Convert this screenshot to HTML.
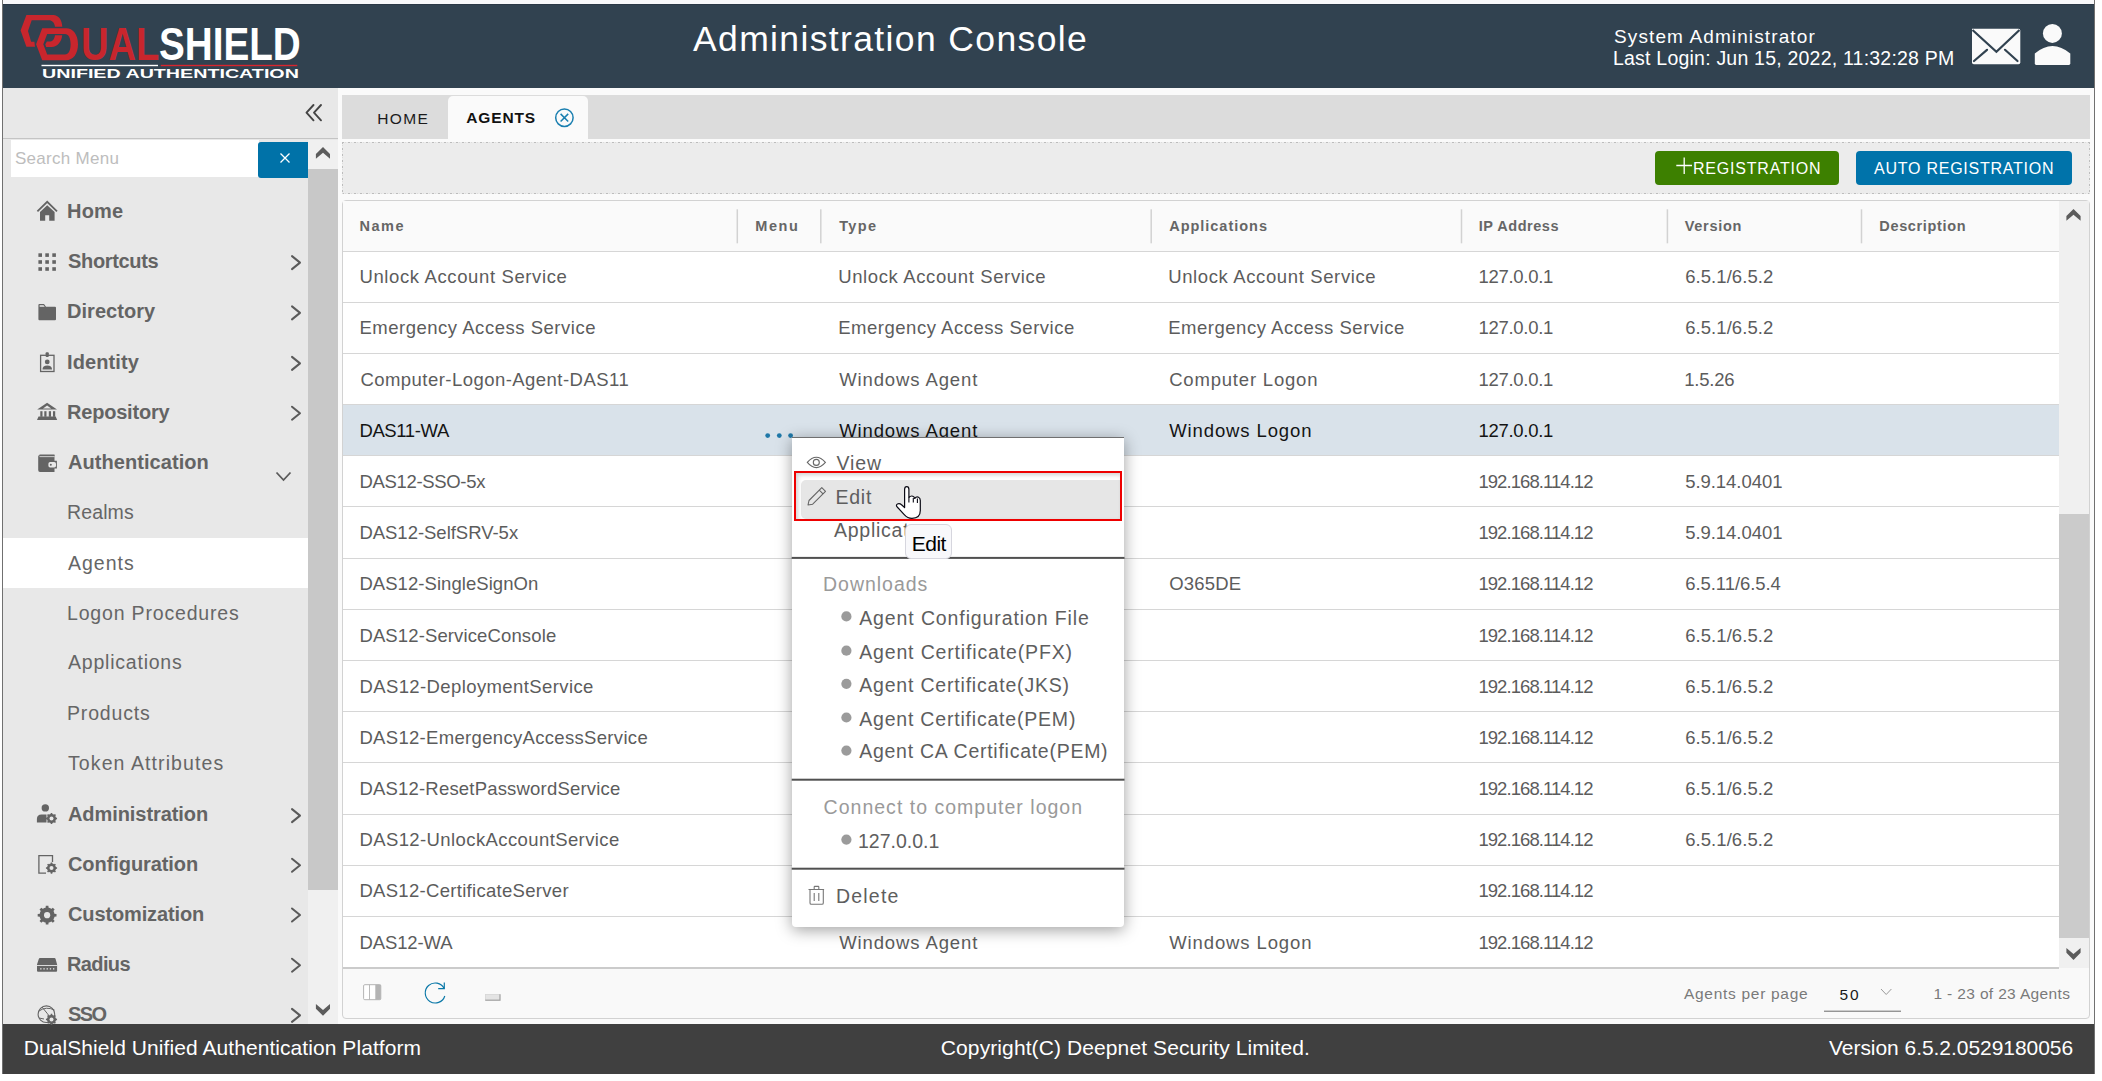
<!DOCTYPE html>
<html><head><meta charset="utf-8">
<style>
*{box-sizing:border-box;margin:0;padding:0}
html,body{width:2102px;height:1081px;overflow:hidden;background:#ffffff;font-family:"Liberation Sans",sans-serif;position:relative}
.a{position:absolute}
.t{position:absolute;white-space:nowrap;line-height:1;font-family:"Liberation Sans",sans-serif}
svg{position:absolute;left:0;top:0}
</style></head><body>
<div class="a" style="left:2px;top:0;width:1px;height:1074px;background:#707070"></div>
<div class="a" style="left:2094px;top:0;width:1px;height:1074px;background:#707070"></div>
<div class="a" style="left:3px;top:0;width:2091px;height:4px;background:#f8f8fa"></div>
<div class="a" style="left:3px;top:4px;width:2091px;height:84px;background:#314250;border-top:1px solid #2a3846"></div>
<div class="a" style="left:3px;top:88px;width:335px;height:936px;background:#e8e8e8"></div>
<div class="a" style="left:338px;top:88px;width:1756px;height:936px;background:#fafafa"></div>
<div class="a" style="left:3px;top:137.5px;width:335px;height:1px;background:#c4c4c4"></div>
<div class="a" style="left:11px;top:140.3px;width:248px;height:36.7px;background:#ffffff"></div>
<div class="a" style="left:258px;top:142px;width:50px;height:35.7px;background:#0072a8;border-radius:3px 0 0 3px"></div>
<div class="a" style="left:308px;top:140px;width:30px;height:884px;background:#f0f0f0"></div>
<div class="a" style="left:308px;top:169px;width:30px;height:721px;background:#c8c8c8"></div>
<div class="a" style="left:3px;top:538px;width:305px;height:50px;background:#ffffff"></div>
<div class="a" style="left:342px;top:95px;width:1747.5px;height:43.7px;background:#dcdcdc"></div>
<div class="a" style="left:448.2px;top:96px;width:139.5px;height:42.7px;background:#fafafa;border-radius:5px 5px 0 0"></div>
<div class="a" style="left:342px;top:142px;width:1747.5px;height:51.5px;background:#ececec"></div>
<div class="a" style="left:342px;top:142px;width:1747.5px;height:1px;background:repeating-linear-gradient(90deg,#bcbcbc 0 2px,#ececec 2px 3px,#dcdcdc 3px 4px,#ececec 4px 6px)"></div>
<div class="a" style="left:342px;top:192.5px;width:1747.5px;height:1px;background:repeating-linear-gradient(90deg,#bcbcbc 0 2px,#ececec 2px 3px,#dcdcdc 3px 4px,#ececec 4px 6px)"></div>
<div class="a" style="left:342px;top:142px;width:1px;height:51.5px;background:repeating-linear-gradient(180deg,#bcbcbc 0 2px,#ececec 2px 3px,#dcdcdc 3px 4px,#ececec 4px 6px)"></div>
<div class="a" style="left:2088.5px;top:142px;width:1px;height:51.5px;background:repeating-linear-gradient(180deg,#bcbcbc 0 2px,#ececec 2px 3px,#dcdcdc 3px 4px,#ececec 4px 6px)"></div>
<div class="a" style="left:1655px;top:151px;width:184px;height:33.6px;background:#3d8000;border-radius:4px"></div>
<div class="a" style="left:1856px;top:151px;width:216px;height:33.6px;background:#0073aa;border-radius:4px"></div>
<div class="a" style="left:342px;top:200px;width:1747.5px;height:819.3px;background:#f9f9f9;border:1px solid #d2d2d2;border-radius:4px"></div>
<div class="a" style="left:343px;top:201px;width:1716px;height:50.3px;background:#fafafa"></div>
<div class="a" style="left:343px;top:250.50px;width:1716px;height:51.19px;background:#ffffff;border-top:1px solid #d6d6d6"></div>
<div class="a" style="left:343px;top:301.69px;width:1716px;height:51.19px;background:#ffffff;border-top:1px solid #d6d6d6"></div>
<div class="a" style="left:343px;top:352.88px;width:1716px;height:51.19px;background:#ffffff;border-top:1px solid #d6d6d6"></div>
<div class="a" style="left:343px;top:404.07px;width:1716px;height:51.19px;background:#d9e2ea;border-top:1px solid #d6d6d6"></div>
<div class="a" style="left:343px;top:455.26px;width:1716px;height:51.19px;background:#ffffff;border-top:1px solid #d6d6d6"></div>
<div class="a" style="left:343px;top:506.45px;width:1716px;height:51.19px;background:#ffffff;border-top:1px solid #d6d6d6"></div>
<div class="a" style="left:343px;top:557.64px;width:1716px;height:51.19px;background:#ffffff;border-top:1px solid #d6d6d6"></div>
<div class="a" style="left:343px;top:608.83px;width:1716px;height:51.19px;background:#ffffff;border-top:1px solid #d6d6d6"></div>
<div class="a" style="left:343px;top:660.02px;width:1716px;height:51.19px;background:#ffffff;border-top:1px solid #d6d6d6"></div>
<div class="a" style="left:343px;top:711.21px;width:1716px;height:51.19px;background:#ffffff;border-top:1px solid #d6d6d6"></div>
<div class="a" style="left:343px;top:762.40px;width:1716px;height:51.19px;background:#ffffff;border-top:1px solid #d6d6d6"></div>
<div class="a" style="left:343px;top:813.59px;width:1716px;height:51.19px;background:#ffffff;border-top:1px solid #d6d6d6"></div>
<div class="a" style="left:343px;top:864.78px;width:1716px;height:51.19px;background:#ffffff;border-top:1px solid #d6d6d6"></div>
<div class="a" style="left:343px;top:915.97px;width:1716px;height:51.19px;background:#ffffff;border-top:1px solid #d6d6d6"></div>
<div class="a" style="left:343px;top:966.7px;width:1716px;height:2px;background:#cbcbcb"></div>
<div class="a" style="left:2059px;top:201px;width:29.5px;height:767px;background:#f0f0f0"></div>
<div class="a" style="left:2059px;top:514px;width:29.5px;height:423.6px;background:#cbcbcb"></div>
<div class="a" style="left:3px;top:1024px;width:2091px;height:49.5px;background:#404040"></div>
<svg width="2102" height="1081" viewBox="0 0 2102 1081">
<path fill="#c8262d" d="M26.4 15 L53.3 15 C58.5 15 62 20 62.3 26.7 L55 26.7 C54.5 22.5 52 20.3 48.9 20.3 L31.7 20.3 L28 31.1 L31.1 41.7 L34.4 41.7 L35 46.7 L26.4 46.7 L20.6 30.5 Z"/>
<path fill="#c8262d" fill-rule="evenodd" d="M42.2 28.3 L66.1 28.3 C73 28.3 78 34.5 78 44.3 C78 54 73 60.3 66.1 60.3 L42.2 60.3 L36.1 44.2 Z M47.2 33.9 L65 33.9 C68.5 33.9 70.6 38 70.6 44.2 C70.6 50.5 68.5 54.4 65 54.4 L47.2 54.4 L43.3 44.2 Z"/>
<path fill="#c8262d" d="M55 35.3 L62.2 35.3 C61.5 42 57.5 46.9 51.7 46.9 L46.1 46.9 L45.3 44.2 L46.9 41.4 L50.5 41.4 C53 41.4 54.5 38.5 55 35.3 Z"/>
<rect x="41.5" y="64.8" width="116.5" height="1.4" fill="#ffffff"/>
<rect x="160.8" y="64.8" width="136.5" height="1.4" fill="#d8262e"/>
<path d="M1972 28.7 L2018.5 28.7 Q2020.3 28.7 2020.3 30.5 L2020.3 62.4 Q2020.3 64.2 2018.5 64.2 L1973.8 64.2 Q1972 64.2 1972 62.4 Z" fill="#fafafa"/>
<path d="M1972.5 30 L1996.4 51.7 L2019.5 30" fill="none" stroke="#314250" stroke-width="2.2"/>
<path d="M1974 61 L1987 49.8 M2005 49.8 L2017.5 61" fill="none" stroke="#314250" stroke-width="2.2" stroke-linecap="round"/>
<circle cx="2052.4" cy="33.4" r="9.5" fill="#fafafa"/>
<path d="M2034.8 53.5 Q2052.5 38.5 2070.3 53.5 L2070.3 63.6 Q2070.3 65 2068.9 65 L2036.2 65 Q2034.8 65 2034.8 63.6 Z" fill="#fafafa"/>
<path d="M313.5 105 L306.5 112.7 L313.5 120.3 M321 105 L314 112.7 L321 120.3" fill="none" stroke="#444" stroke-width="1.9" stroke-linecap="round" stroke-linejoin="round"/>
<path d="M280.5 153.5 L289.5 162.5 M289.5 153.5 L280.5 162.5" fill="none" stroke="#fff" stroke-width="1.3"/>
<polygon points="315.9,158.8 315.9,154 323,147 330,154 330,158.8 323,152.8" fill="#5c5c5c"/>
<polygon points="315.9,1004 315.9,1008.8 323,1015.8 330,1008.8 330,1004 323,1010" fill="#5c5c5c"/>
<path d="M37.4 211.4 L47.2 201.8 L57 211.4" fill="none" stroke="#646464" stroke-width="1.8"/>
<path d="M40 212 L47.2 205.2 L54.6 212 L54.6 220.8 L49.2 220.8 L49.2 215.2 L45.2 215.2 L45.2 220.8 L40 220.8 Z" fill="#646464"/>
<rect x="38.4" y="253.3" width="3.6" height="3.6" fill="#646464"/>
<rect x="38.4" y="260.2" width="3.6" height="3.6" fill="#646464"/>
<rect x="38.4" y="267.2" width="3.6" height="3.6" fill="#646464"/>
<rect x="45.3" y="253.3" width="3.6" height="3.6" fill="#646464"/>
<rect x="45.3" y="260.2" width="3.6" height="3.6" fill="#646464"/>
<rect x="45.3" y="267.2" width="3.6" height="3.6" fill="#646464"/>
<rect x="52.3" y="253.3" width="3.6" height="3.6" fill="#646464"/>
<rect x="52.3" y="260.2" width="3.6" height="3.6" fill="#646464"/>
<rect x="52.3" y="267.2" width="3.6" height="3.6" fill="#646464"/>
<path d="M38.4 305 Q38.4 304 39.4 304 L44 304 L46 306.8 L55 306.8 Q56 306.8 56 307.8 L56 319.2 Q56 320.2 55 320.2 L39.4 320.2 Q38.4 320.2 38.4 319.2 Z" fill="#646464"/>
<path d="M39.6 305.2 L43.5 305.2 L44.8 306.8 L39.6 306.8 Z" fill="#e8e8e8"/>
<rect x="40.6" y="355.3" width="13.4" height="16.2" fill="none" stroke="#646464" stroke-width="1.3"/>
<rect x="45.6" y="352.3" width="3.2" height="4.8" rx="1" fill="#646464"/>
<circle cx="47.25" cy="361.9" r="2.4" fill="#646464"/>
<path d="M42.5 369.6 Q42.5 365.5 47.25 365.5 Q52 365.5 52 369.6 Z" fill="#646464"/>
<path d="M37.2 409.5 L47.1 402.7 L57 409.5 Z" fill="#646464"/>
<path d="M43 408.4 L47.1 405.6 L51.2 408.4 Z" fill="#e8e8e8"/>
<rect x="40.3" y="411.2" width="2.2" height="5.6" fill="#646464"/>
<rect x="44.3" y="411.2" width="2.2" height="5.6" fill="#646464"/>
<rect x="48.8" y="411.2" width="2.2" height="5.6" fill="#646464"/>
<rect x="53" y="411.2" width="2.2" height="5.6" fill="#646464"/>
<path d="M38.5 416.6 L55.7 416.6 L57.2 420 L37 420 Z" fill="#646464"/>
<path d="M39.5 454.5 L54.5 454.5 L54.5 456 L39.5 456 Z" fill="#646464"/>
<path d="M38.2 456.5 Q38.2 455.2 39.5 455.2 L54.5 455.2 L54.5 460.8 L56.9 460.8 L56.9 468.5 L54.5 468.5 L54.5 471.9 L40 471.9 Q38.2 471.9 38.2 470 Z" fill="#646464"/>
<rect x="39.5" y="456.3" width="15" height="0.8" fill="#e8e8e8"/>
<rect x="48.4" y="462" width="7.6" height="5.6" rx="1.8" fill="#e8e8e8"/>
<circle cx="50.8" cy="464.8" r="1" fill="#646464"/>
<circle cx="45.3" cy="807.9" r="3.7" fill="#646464"/>
<path d="M36.9 822.5 L36.9 819 Q36.9 814.4 41.5 814.4 L46.5 814.4 L46.5 822.5 Z" fill="#646464"/>
<polygon points="55.55,817.61 57.05,817.73 57.05,819.27 55.55,819.39 54.99,820.73 55.96,821.88 54.88,822.96 53.73,821.99 52.39,822.55 52.27,824.05 50.73,824.05 50.61,822.55 49.27,821.99 48.12,822.96 47.04,821.88 48.01,820.73 47.45,819.39 45.95,819.27 45.95,817.73 47.45,817.61 48.01,816.27 47.04,815.12 48.12,814.04 49.27,815.01 50.61,814.45 50.73,812.95 52.27,812.95 52.39,814.45 53.73,815.01 54.88,814.04 55.96,815.12 54.99,816.27" fill="#646464"/><circle cx="51.5" cy="818.5" r="4.48" fill="#646464"/><circle cx="51.5" cy="818.5" r="2.0" fill="#e8e8e8"/>
<path d="M46 873.1 L38.9 873.1 L38.9 855.6 L52.5 855.6 L52.5 862" fill="none" stroke="#646464" stroke-width="1.3"/>
<polygon points="55.55,867.21 57.05,867.33 57.05,868.87 55.55,868.99 54.99,870.33 55.96,871.48 54.88,872.56 53.73,871.59 52.39,872.15 52.27,873.65 50.73,873.65 50.61,872.15 49.27,871.59 48.12,872.56 47.04,871.48 48.01,870.33 47.45,868.99 45.95,868.87 45.95,867.33 47.45,867.21 48.01,865.87 47.04,864.72 48.12,863.64 49.27,864.61 50.61,864.05 50.73,862.55 52.27,862.55 52.39,864.05 53.73,864.61 54.88,863.64 55.96,864.72 54.99,865.87" fill="#646464"/><circle cx="51.5" cy="868.1" r="4.48" fill="#646464"/><circle cx="51.5" cy="868.1" r="2.0" fill="#e8e8e8"/>
<polygon points="53.97,913.69 56.51,913.90 56.51,916.50 53.97,916.71 53.02,918.99 54.67,920.93 52.83,922.77 50.89,921.12 48.61,922.07 48.40,924.61 45.80,924.61 45.59,922.07 43.31,921.12 41.37,922.77 39.53,920.93 41.18,918.99 40.23,916.71 37.69,916.50 37.69,913.90 40.23,913.69 41.18,911.41 39.53,909.47 41.37,907.63 43.31,909.28 45.59,908.33 45.80,905.79 48.40,905.79 48.61,908.33 50.89,909.28 52.83,907.63 54.67,909.47 53.02,911.41" fill="#646464"/><circle cx="47.1" cy="915.2" r="7.60" fill="#646464"/><circle cx="47.1" cy="915.2" r="3.1" fill="#e8e8e8"/>
<path d="M40 958 L54.5 958 Q55.3 958 55.6 959 L57.1 964.5 L57.1 970.8 Q57.1 971.8 56.1 971.8 L38 971.8 Q37 971.8 37 970.8 L37 964.5 L38.8 959 Q39.1 958 40 958 Z" fill="#646464"/>
<rect x="37" y="965" width="20.1" height="0.9" fill="#e8e8e8"/>
<rect x="40.2" y="968.2" width="1.3" height="1.3" fill="#e8e8e8"/>
<rect x="43.4" y="968.2" width="1.3" height="1.3" fill="#e8e8e8"/>
<rect x="46.6" y="968.2" width="1.3" height="1.3" fill="#e8e8e8"/>
<rect x="49.8" y="968.2" width="1.3" height="1.3" fill="#e8e8e8"/>
<rect x="53" y="968.2" width="1.3" height="1.3" fill="#e8e8e8"/>
<circle cx="46.4" cy="1014.2" r="8.3" fill="none" stroke="#646464" stroke-width="1.1"/>
<path d="M39 1011 Q46 1006 54.5 1010 M42 1007 Q48 1014 52 1020 M39 1018 L44 1019" fill="none" stroke="#646464" stroke-width="1"/>
<polygon points="55.55,1018.51 57.05,1018.63 57.05,1020.17 55.55,1020.29 54.99,1021.63 55.96,1022.78 54.88,1023.86 53.73,1022.89 52.39,1023.45 52.27,1024.95 50.73,1024.95 50.61,1023.45 49.27,1022.89 48.12,1023.86 47.04,1022.78 48.01,1021.63 47.45,1020.29 45.95,1020.17 45.95,1018.63 47.45,1018.51 48.01,1017.17 47.04,1016.02 48.12,1014.94 49.27,1015.91 50.61,1015.35 50.73,1013.85 52.27,1013.85 52.39,1015.35 53.73,1015.91 54.88,1014.94 55.96,1016.02 54.99,1017.17" fill="#646464"/><circle cx="51.5" cy="1019.4" r="4.48" fill="#646464"/><circle cx="51.5" cy="1019.4" r="2.0" fill="#e8e8e8"/>
<path d="M292 256.09999999999997 L300 262.59999999999997 L292 269.09999999999997" fill="none" stroke="#5a5a5a" stroke-width="2" stroke-linecap="round" stroke-linejoin="round"/>
<path d="M292 306.4 L300 312.9 L292 319.4" fill="none" stroke="#5a5a5a" stroke-width="2" stroke-linecap="round" stroke-linejoin="round"/>
<path d="M292 356.9 L300 363.4 L292 369.9" fill="none" stroke="#5a5a5a" stroke-width="2" stroke-linecap="round" stroke-linejoin="round"/>
<path d="M292 406.7 L300 413.2 L292 419.7" fill="none" stroke="#5a5a5a" stroke-width="2" stroke-linecap="round" stroke-linejoin="round"/>
<path d="M292 809.1 L300 815.6 L292 822.1" fill="none" stroke="#5a5a5a" stroke-width="2" stroke-linecap="round" stroke-linejoin="round"/>
<path d="M292 858.8 L300 865.3 L292 871.8" fill="none" stroke="#5a5a5a" stroke-width="2" stroke-linecap="round" stroke-linejoin="round"/>
<path d="M292 908.5 L300 915.0 L292 921.5" fill="none" stroke="#5a5a5a" stroke-width="2" stroke-linecap="round" stroke-linejoin="round"/>
<path d="M292 958.6999999999999 L300 965.1999999999999 L292 971.6999999999999" fill="none" stroke="#5a5a5a" stroke-width="2" stroke-linecap="round" stroke-linejoin="round"/>
<path d="M292 1008.9 L300 1015.4 L292 1021.9" fill="none" stroke="#5a5a5a" stroke-width="2" stroke-linecap="round" stroke-linejoin="round"/>
<path d="M276.5 472.5 L283.5 480 L290.5 472.5" fill="none" stroke="#5a5a5a" stroke-width="1.8"/>
<circle cx="564.4" cy="117.7" r="8.7" fill="none" stroke="#1a7fb0" stroke-width="1.5"/>
<path d="M560.6 113.9 L568.2 121.5 M568.2 113.9 L560.6 121.5" fill="none" stroke="#1a7fb0" stroke-width="1.5"/>
<path d="M1684.2 157.5 L1684.2 174 M1676.3 165.5 L1692 165.5" fill="none" stroke="#fff" stroke-width="1.3"/>
<rect x="736.55" y="209.3" width="1.5" height="34" fill="#d2d2d2"/>
<rect x="820.05" y="209.3" width="1.5" height="34" fill="#d2d2d2"/>
<rect x="1150.45" y="209.3" width="1.5" height="34" fill="#d2d2d2"/>
<rect x="1460.75" y="209.3" width="1.5" height="34" fill="#d2d2d2"/>
<rect x="1666.65" y="209.3" width="1.5" height="34" fill="#d2d2d2"/>
<rect x="1860.75" y="209.3" width="1.5" height="34" fill="#d2d2d2"/>
<polygon points="2066.4,220.8 2066.4,216 2073.5,209 2080.6,216 2080.6,220.8 2073.5,214.8" fill="#5c5c5c"/>
<polygon points="2066.4,948 2066.4,952.8 2073.5,960 2080.6,952.8 2080.6,948 2073.5,954" fill="#5c5c5c"/>
<circle cx="767.7" cy="435.6" r="2.4" fill="#1f78a8"/>
<circle cx="779.3" cy="435.6" r="2.4" fill="#1f78a8"/>
<circle cx="790.6" cy="435.6" r="2.4" fill="#1f78a8"/>
<rect x="363.6" y="984.7" width="17.2" height="15" rx="1.2" fill="#fff" stroke="#b4b4b4" stroke-width="1"/>
<rect x="375.3" y="984.7" width="5.5" height="15" fill="#b4b4b4"/>
<rect x="369.1" y="984.7" width="0.9" height="15" fill="#b4b4b4"/>
<path d="M444.3 982.6 L444.3 988.6 L438.2 988.6" fill="none" stroke="#0a78a8" stroke-width="1.15"/>
<path d="M444.2 988.5 A10 10 0 1 0 444.8 996" fill="none" stroke="#0a78a8" stroke-width="1.15"/>
<rect x="485.2" y="994.2" width="15.4" height="6.6" fill="#a0a0a0"/>
<rect x="485.2" y="994.2" width="14.2" height="5.4" fill="#e4e4e4"/>
<path d="M1881 989 L1886.2 994.5 L1891.4 989" fill="none" stroke="#9a9a9a" stroke-width="1"/>
<rect x="1824" y="1010.6" width="77" height="1.3" fill="#8a8a8a"/>
</svg>
<div class="t" style="left:693.00px;top:22.00px;font-size:35.5px;color:#ffffff;letter-spacing:1.367px;">Administration Console</div>
<div class="t" style="left:1614.00px;top:27.00px;font-size:19px;color:#ffffff;letter-spacing:1.120px;">System Administrator</div>
<div class="t" style="left:1613.00px;top:49.00px;font-size:19.5px;color:#ffffff;letter-spacing:0.214px;">Last Login: Jun 15, 2022, 11:32:28 PM</div>
<div class="t" style="left:80.82px;top:22.00px;font-size:45.5px;color:#c8262d;letter-spacing:0.000px;font-weight:bold;transform:scaleX(0.8378);transform-origin:0 0;">UAL</div>
<div class="t" style="left:159.35px;top:22.00px;font-size:45.5px;color:#ffffff;letter-spacing:0.000px;font-weight:bold;transform:scaleX(0.8494);transform-origin:0 0;">SHIELD</div>
<div class="t" style="left:41.50px;top:67.00px;font-size:13px;color:#ffffff;letter-spacing:0.000px;font-weight:bold;transform:scaleX(1.5135);transform-origin:0 0;">UNIFIED AUTHENTICATION</div>
<div class="t" style="left:15.00px;top:150.00px;font-size:17px;color:#bdbdbd;letter-spacing:0.274px;">Search Menu</div>
<div class="t" style="left:67.00px;top:201.00px;font-size:20px;color:#646464;letter-spacing:0.186px;font-weight:bold;">Home</div>
<div class="t" style="left:68.00px;top:251.00px;font-size:20px;color:#646464;letter-spacing:-0.340px;font-weight:bold;">Shortcuts</div>
<div class="t" style="left:67.00px;top:301.00px;font-size:20px;color:#646464;letter-spacing:0.039px;font-weight:bold;">Directory</div>
<div class="t" style="left:67.00px;top:352.00px;font-size:20px;color:#646464;letter-spacing:0.101px;font-weight:bold;">Identity</div>
<div class="t" style="left:67.00px;top:402.00px;font-size:20px;color:#646464;letter-spacing:-0.204px;font-weight:bold;">Repository</div>
<div class="t" style="left:68.00px;top:452.00px;font-size:20px;color:#646464;letter-spacing:0.064px;font-weight:bold;">Authentication</div>
<div class="t" style="left:67.00px;top:503.00px;font-size:19.5px;color:#666666;letter-spacing:0.130px;">Realms</div>
<div class="t" style="left:68.00px;top:554.00px;font-size:19.5px;color:#666666;letter-spacing:1.008px;">Agents</div>
<div class="t" style="left:67.00px;top:604.00px;font-size:19.5px;color:#666666;letter-spacing:0.826px;">Logon Procedures</div>
<div class="t" style="left:68.00px;top:653.00px;font-size:19.5px;color:#666666;letter-spacing:0.782px;">Applications</div>
<div class="t" style="left:67.00px;top:704.00px;font-size:19.5px;color:#666666;letter-spacing:0.828px;">Products</div>
<div class="t" style="left:68.00px;top:754.00px;font-size:19.5px;color:#666666;letter-spacing:1.095px;">Token Attributes</div>
<div class="t" style="left:68.00px;top:804.00px;font-size:20px;color:#646464;letter-spacing:-0.069px;font-weight:bold;">Administration</div>
<div class="t" style="left:68.00px;top:854.00px;font-size:20px;color:#646464;letter-spacing:-0.072px;font-weight:bold;">Configuration</div>
<div class="t" style="left:68.00px;top:904.00px;font-size:20px;color:#646464;letter-spacing:-0.130px;font-weight:bold;">Customization</div>
<div class="t" style="left:67.00px;top:954.00px;font-size:20px;color:#646464;letter-spacing:-0.631px;font-weight:bold;">Radius</div>
<div class="t" style="left:68.00px;top:1004.00px;font-size:20px;color:#646464;letter-spacing:-1.540px;font-weight:bold;">SSO</div>
<div class="t" style="left:377.20px;top:111.00px;font-size:15.5px;color:#1b1b1b;letter-spacing:1.379px;">HOME</div>
<div class="t" style="left:466.30px;top:110.00px;font-size:15.5px;color:#111111;letter-spacing:0.850px;font-weight:bold;">AGENTS</div>
<div class="t" style="left:1693.00px;top:161.00px;font-size:16px;color:#ffffff;letter-spacing:0.794px;">REGISTRATION</div>
<div class="t" style="left:1874.00px;top:161.00px;font-size:16px;color:#ffffff;letter-spacing:0.758px;">AUTO REGISTRATION</div>
<div class="t" style="left:359.60px;top:219.00px;font-size:14.5px;color:#666666;letter-spacing:1.457px;font-weight:bold;">Name</div>
<div class="t" style="left:755.30px;top:219.00px;font-size:14.5px;color:#666666;letter-spacing:1.567px;font-weight:bold;">Menu</div>
<div class="t" style="left:839.20px;top:219.00px;font-size:14.5px;color:#666666;letter-spacing:1.366px;font-weight:bold;">Type</div>
<div class="t" style="left:1169.20px;top:219.00px;font-size:14.5px;color:#666666;letter-spacing:0.978px;font-weight:bold;">Applications</div>
<div class="t" style="left:1478.80px;top:219.00px;font-size:14.5px;color:#666666;letter-spacing:0.524px;font-weight:bold;">IP Address</div>
<div class="t" style="left:1684.70px;top:219.00px;font-size:14.5px;color:#666666;letter-spacing:0.712px;font-weight:bold;">Version</div>
<div class="t" style="left:1879.30px;top:219.00px;font-size:14.5px;color:#666666;letter-spacing:0.649px;font-weight:bold;">Description</div>
<div class="t" style="left:359.40px;top:268.00px;font-size:18.5px;color:#5c5c5c;letter-spacing:0.625px;">Unlock Account Service</div>
<div class="t" style="left:838.20px;top:268.00px;font-size:18.5px;color:#5c5c5c;letter-spacing:0.625px;">Unlock Account Service</div>
<div class="t" style="left:1168.20px;top:268.00px;font-size:18.5px;color:#5c5c5c;letter-spacing:0.625px;">Unlock Account Service</div>
<div class="t" style="left:1478.40px;top:268.00px;font-size:18.5px;color:#5c5c5c;letter-spacing:-0.283px;">127.0.0.1</div>
<div class="t" style="left:1685.20px;top:268.00px;font-size:18.5px;color:#5c5c5c;letter-spacing:0.066px;">6.5.1/6.5.2</div>
<div class="t" style="left:359.40px;top:319.00px;font-size:18.5px;color:#5c5c5c;letter-spacing:0.519px;">Emergency Access Service</div>
<div class="t" style="left:838.20px;top:319.00px;font-size:18.5px;color:#5c5c5c;letter-spacing:0.519px;">Emergency Access Service</div>
<div class="t" style="left:1168.20px;top:319.00px;font-size:18.5px;color:#5c5c5c;letter-spacing:0.519px;">Emergency Access Service</div>
<div class="t" style="left:1478.40px;top:319.00px;font-size:18.5px;color:#5c5c5c;letter-spacing:-0.283px;">127.0.0.1</div>
<div class="t" style="left:1685.20px;top:319.00px;font-size:18.5px;color:#5c5c5c;letter-spacing:0.066px;">6.5.1/6.5.2</div>
<div class="t" style="left:360.40px;top:371.00px;font-size:18.5px;color:#5c5c5c;letter-spacing:0.462px;">Computer-Logon-Agent-DAS11</div>
<div class="t" style="left:839.20px;top:371.00px;font-size:18.5px;color:#5c5c5c;letter-spacing:0.884px;">Windows Agent</div>
<div class="t" style="left:1169.20px;top:371.00px;font-size:18.5px;color:#5c5c5c;letter-spacing:0.806px;">Computer Logon</div>
<div class="t" style="left:1478.40px;top:371.00px;font-size:18.5px;color:#5c5c5c;letter-spacing:-0.283px;">127.0.0.1</div>
<div class="t" style="left:1684.20px;top:371.00px;font-size:18.5px;color:#5c5c5c;letter-spacing:-0.229px;">1.5.26</div>
<div class="t" style="left:359.40px;top:422.00px;font-size:18.5px;color:#141414;letter-spacing:-0.368px;">DAS11-WA</div>
<div class="t" style="left:839.20px;top:422.00px;font-size:18.5px;color:#141414;letter-spacing:0.884px;">Windows Agent</div>
<div class="t" style="left:1169.20px;top:422.00px;font-size:18.5px;color:#141414;letter-spacing:0.888px;">Windows Logon</div>
<div class="t" style="left:1478.40px;top:422.00px;font-size:18.5px;color:#141414;letter-spacing:-0.283px;">127.0.0.1</div>
<div class="t" style="left:359.40px;top:473.00px;font-size:18.5px;color:#5c5c5c;letter-spacing:-0.318px;">DAS12-SSO-5x</div>
<div class="t" style="left:1478.40px;top:473.00px;font-size:18.5px;color:#5c5c5c;letter-spacing:-0.933px;">192.168.114.12</div>
<div class="t" style="left:1685.20px;top:473.00px;font-size:18.5px;color:#5c5c5c;letter-spacing:-0.044px;">5.9.14.0401</div>
<div class="t" style="left:359.40px;top:524.00px;font-size:18.5px;color:#5c5c5c;letter-spacing:-0.019px;">DAS12-SelfSRV-5x</div>
<div class="t" style="left:1478.40px;top:524.00px;font-size:18.5px;color:#5c5c5c;letter-spacing:-0.933px;">192.168.114.12</div>
<div class="t" style="left:1685.20px;top:524.00px;font-size:18.5px;color:#5c5c5c;letter-spacing:-0.044px;">5.9.14.0401</div>
<div class="t" style="left:359.40px;top:575.00px;font-size:18.5px;color:#5c5c5c;letter-spacing:0.058px;">DAS12-SingleSignOn</div>
<div class="t" style="left:1169.20px;top:575.00px;font-size:18.5px;color:#5c5c5c;letter-spacing:0.197px;">O365DE</div>
<div class="t" style="left:1478.40px;top:575.00px;font-size:18.5px;color:#5c5c5c;letter-spacing:-0.933px;">192.168.114.12</div>
<div class="t" style="left:1685.20px;top:575.00px;font-size:18.5px;color:#5c5c5c;letter-spacing:-0.060px;">6.5.11/6.5.4</div>
<div class="t" style="left:359.40px;top:627.00px;font-size:18.5px;color:#5c5c5c;letter-spacing:0.129px;">DAS12-ServiceConsole</div>
<div class="t" style="left:1478.40px;top:627.00px;font-size:18.5px;color:#5c5c5c;letter-spacing:-0.933px;">192.168.114.12</div>
<div class="t" style="left:1685.20px;top:627.00px;font-size:18.5px;color:#5c5c5c;letter-spacing:0.066px;">6.5.1/6.5.2</div>
<div class="t" style="left:359.40px;top:678.00px;font-size:18.5px;color:#5c5c5c;letter-spacing:0.400px;">DAS12-DeploymentService</div>
<div class="t" style="left:1478.40px;top:678.00px;font-size:18.5px;color:#5c5c5c;letter-spacing:-0.933px;">192.168.114.12</div>
<div class="t" style="left:1685.20px;top:678.00px;font-size:18.5px;color:#5c5c5c;letter-spacing:0.066px;">6.5.1/6.5.2</div>
<div class="t" style="left:359.40px;top:729.00px;font-size:18.5px;color:#5c5c5c;letter-spacing:0.320px;">DAS12-EmergencyAccessService</div>
<div class="t" style="left:1478.40px;top:729.00px;font-size:18.5px;color:#5c5c5c;letter-spacing:-0.933px;">192.168.114.12</div>
<div class="t" style="left:1685.20px;top:729.00px;font-size:18.5px;color:#5c5c5c;letter-spacing:0.066px;">6.5.1/6.5.2</div>
<div class="t" style="left:359.40px;top:780.00px;font-size:18.5px;color:#5c5c5c;letter-spacing:0.195px;">DAS12-ResetPasswordService</div>
<div class="t" style="left:1478.40px;top:780.00px;font-size:18.5px;color:#5c5c5c;letter-spacing:-0.933px;">192.168.114.12</div>
<div class="t" style="left:1685.20px;top:780.00px;font-size:18.5px;color:#5c5c5c;letter-spacing:0.066px;">6.5.1/6.5.2</div>
<div class="t" style="left:359.40px;top:831.00px;font-size:18.5px;color:#5c5c5c;letter-spacing:0.401px;">DAS12-UnlockAccountService</div>
<div class="t" style="left:1478.40px;top:831.00px;font-size:18.5px;color:#5c5c5c;letter-spacing:-0.933px;">192.168.114.12</div>
<div class="t" style="left:1685.20px;top:831.00px;font-size:18.5px;color:#5c5c5c;letter-spacing:0.066px;">6.5.1/6.5.2</div>
<div class="t" style="left:359.40px;top:882.00px;font-size:18.5px;color:#5c5c5c;letter-spacing:0.301px;">DAS12-CertificateServer</div>
<div class="t" style="left:1478.40px;top:882.00px;font-size:18.5px;color:#5c5c5c;letter-spacing:-0.933px;">192.168.114.12</div>
<div class="t" style="left:359.40px;top:934.00px;font-size:18.5px;color:#5c5c5c;letter-spacing:-0.093px;">DAS12-WA</div>
<div class="t" style="left:839.20px;top:934.00px;font-size:18.5px;color:#5c5c5c;letter-spacing:0.884px;">Windows Agent</div>
<div class="t" style="left:1169.20px;top:934.00px;font-size:18.5px;color:#5c5c5c;letter-spacing:0.888px;">Windows Logon</div>
<div class="t" style="left:1478.40px;top:934.00px;font-size:18.5px;color:#5c5c5c;letter-spacing:-0.933px;">192.168.114.12</div>
<div class="t" style="left:1684.00px;top:986.00px;font-size:15.5px;color:#7a7a7a;letter-spacing:0.705px;">Agents per page</div>
<div class="t" style="left:1839.50px;top:987.00px;font-size:15.5px;color:#1a1a1a;letter-spacing:1.880px;">50</div>
<div class="t" style="left:1933.50px;top:986.00px;font-size:15.5px;color:#7a7a7a;letter-spacing:0.348px;">1 - 23 of 23 Agents</div>
<div class="t" style="left:23.70px;top:1037.00px;font-size:21px;color:#ffffff;letter-spacing:0.068px;">DualShield Unified Authentication Platform</div>
<div class="t" style="left:940.80px;top:1037.00px;font-size:21px;color:#ffffff;letter-spacing:0.103px;">Copyright(C) Deepnet Security Limited.</div>
<div class="t" style="left:1829.00px;top:1037.00px;font-size:21px;color:#ffffff;letter-spacing:-0.045px;">Version 6.5.2.0529180056</div>
<div class="a" style="left:791.7px;top:436.6px;width:332.8px;height:490.4px;background:#ffffff;border-radius:0 0 4px 4px;border-top:1.5px solid #707070;box-shadow:0 3px 16px rgba(0,0,0,0.38)"></div>
<div class="a" style="left:801px;top:480px;width:319px;height:39px;background:#e6e6e6;border-radius:5px 0 0 5px"></div>
<div class="a" style="left:794.4px;top:471px;width:327.4px;height:50px;border:2px solid #ee0000;box-shadow:inset 2px 2px 4px rgba(0,0,0,0.18)"></div>
<svg width="2102" height="1081" viewBox="0 0 2102 1081">
<path d="M807.3 462.4 Q816.3 452 825.4 462.4 Q816.3 472.8 807.3 462.4 Z" fill="none" stroke="#666" stroke-width="1.1"/>
<circle cx="816.3" cy="462.4" r="3" fill="none" stroke="#666" stroke-width="1.1"/>
<path d="M808 505 L809 500.5 L821.8 487.7 L825.5 491.4 L812.7 504.2 Z M819.3 490.2 L823 493.9" fill="none" stroke="#666" stroke-width="1.1" stroke-linejoin="round"/>
<circle cx="846.4" cy="616.4" r="5.1" fill="#9b9b9b"/>
<circle cx="846.4" cy="650.7" r="5.1" fill="#9b9b9b"/>
<circle cx="846.4" cy="683.8" r="5.1" fill="#9b9b9b"/>
<circle cx="846.4" cy="717.5" r="5.1" fill="#9b9b9b"/>
<circle cx="846.4" cy="750.6" r="5.1" fill="#9b9b9b"/>
<circle cx="846.4" cy="839.6" r="5.1" fill="#9b9b9b"/>
<rect x="791.7" y="556.9" width="332.8" height="2" fill="#505050"/>
<rect x="791.7" y="778.7" width="332.8" height="2" fill="#505050"/>
<rect x="791.7" y="867.7" width="332.8" height="2" fill="#505050"/>
<path d="M808.5 889.5 L824.1 889.5 M814.2 889.2 L814.2 887 Q814.2 886.4 814.8 886.4 L818.2 886.4 Q818.8 886.4 818.8 887 L818.8 889.2 M810 890 L810 903 Q810 904.3 811.3 904.3 L822 904.3 Q823.3 904.3 823.3 903 L823.3 890 M814.2 893 L814.2 901 M818.8 893 L818.8 901" fill="none" stroke="#777" stroke-width="1.1"/>
</svg>
<div class="t" style="left:836.50px;top:454.00px;font-size:19.5px;color:#5e5e5e;letter-spacing:0.856px;">View</div>
<div class="t" style="left:835.50px;top:488.00px;font-size:19.5px;color:#5e5e5e;letter-spacing:0.739px;">Edit</div>
<div class="t" style="left:834.00px;top:521.00px;font-size:19.5px;color:#5e5e5e;letter-spacing:0.750px;">Applicat</div>
<div class="t" style="left:823.00px;top:575.00px;font-size:19.5px;color:#9a9a9a;letter-spacing:0.985px;">Downloads</div>
<div class="t" style="left:859.20px;top:609.00px;font-size:19.5px;color:#5e5e5e;letter-spacing:0.889px;">Agent Configuration File</div>
<div class="t" style="left:859.20px;top:643.00px;font-size:19.5px;color:#5e5e5e;letter-spacing:0.844px;">Agent Certificate(PFX)</div>
<div class="t" style="left:859.20px;top:676.00px;font-size:19.5px;color:#5e5e5e;letter-spacing:0.809px;">Agent Certificate(JKS)</div>
<div class="t" style="left:859.20px;top:710.00px;font-size:19.5px;color:#5e5e5e;letter-spacing:0.800px;">Agent Certificate(PEM)</div>
<div class="t" style="left:859.20px;top:742.00px;font-size:19.5px;color:#5e5e5e;letter-spacing:0.733px;">Agent CA Certificate(PEM)</div>
<div class="t" style="left:823.60px;top:798.00px;font-size:19.5px;color:#9a9a9a;letter-spacing:1.013px;">Connect to computer logon</div>
<div class="t" style="left:858.00px;top:832.00px;font-size:19.5px;color:#5e5e5e;letter-spacing:-0.010px;">127.0.0.1</div>
<div class="t" style="left:836.00px;top:887.00px;font-size:19.5px;color:#5e5e5e;letter-spacing:1.196px;">Delete</div>
<div class="a" style="left:905.3px;top:523.7px;width:47.2px;height:35.3px;background:#f8f8fb;border:1px solid #d6d6de;border-radius:6px"></div>
<div class="t" style="left:911.80px;top:533.00px;font-size:21px;color:#000000;letter-spacing:-0.517px;">Edit</div>
<svg width="2102" height="1081" viewBox="0 0 2102 1081">
<path d="M904.6 489.5 Q904.6 486.7 906.75 486.7 Q908.9 486.7 908.9 489.5 L908.9 497.5 Q910.8 495.5 912.8 496.2 Q914.5 496.8 914.7 498.5 Q916.5 496.3 918.5 497.3 Q920.3 498.3 920.3 500.5 L920.3 510.5 Q920.3 518.3 912 518.3 Q907.5 518.3 904.5 514.8 L897.2 507 Q895.6 505 897.5 504 Q899.5 503 901.8 505 L904.6 507.5 Z" fill="#fff" stroke="#0a0a14" stroke-width="1.2" stroke-linejoin="round"/>
<path d="M908.9 497.5 L908.9 502.5 M913.3 498 L913.3 502.5 M917.4 498.5 L917.4 503" fill="none" stroke="#0a0a14" stroke-width="1.1"/>
</svg>
</body></html>
